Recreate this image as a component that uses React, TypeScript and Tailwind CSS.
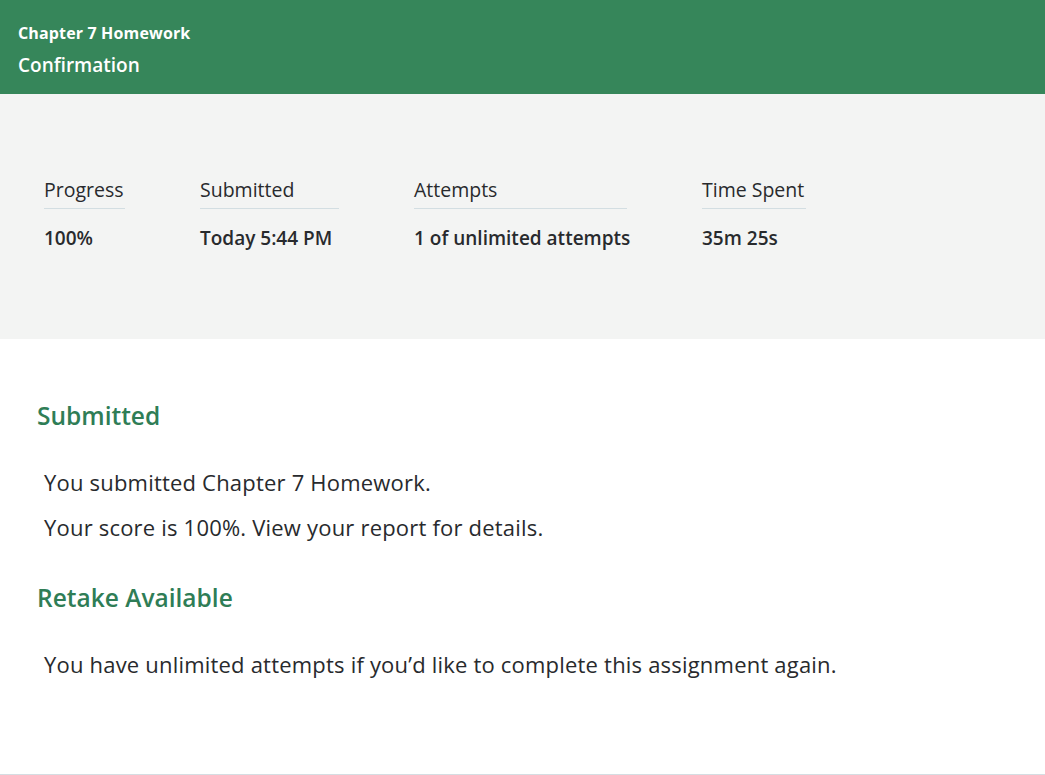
import React from "react";

const stats = [
	{ label: "Progress", value: "100%", width: "w-[81px]" },
	{ label: "Submitted", value: "Today 5:44 PM", width: "w-[139px]" },
	{ label: "Attempts", value: "1 of unlimited attempts", width: "w-[213px]" },
	{ label: "Time Spent", value: "35m 25s", width: "w-[104px]" },
];

export default function App() {
	return (
		<div
			className="w-[1045px] h-[775px] bg-white text-[#282a2d] border-b border-[#d5dde2]"
			style={{ fontFamily: "'Open Sans', Lato, sans-serif" }}
		>
			<header className="h-[94px] bg-[#36865a] text-white px-[18px] pt-[22px]">
				<div className="text-[16px] font-bold leading-[22px] tracking-[0.15px]">Chapter 7 Homework</div>
				<h1 className="text-[19px] font-semibold leading-[22px] mt-[10px]">Confirmation</h1>
			</header>

			<section className="h-[245px] bg-[#f3f4f3] px-[44px] pt-[84px]">
				<dl className="flex gap-[75px]">
					{stats.map((s) => (
						<div key={s.label} className={`flex flex-col ${s.width}`}>
							<dt className="text-[19.5px] leading-[24px] pb-[6px] border-b border-[#d3dee2] whitespace-nowrap">
								{s.label}
							</dt>
							<dd className="text-[19px] font-semibold leading-[24px] mt-[17px] whitespace-nowrap">
								{s.value}
							</dd>
						</div>
					))}
				</dl>
			</section>

			<main className="px-[37px] pt-[62px]">
				<h2 className="text-[24.5px] font-semibold text-[#2f7d56] leading-[30px]">Submitted</h2>
				<div className="pl-[7px] mt-[38px] text-[22px] tracking-[0.2px] leading-[26px] flex flex-col gap-[19px]">
					<p>You submitted Chapter 7 Homework.</p>
					<p>Your score is 100%. View your report for details.</p>
				</div>
				<h2 className="text-[24.5px] font-semibold text-[#2f7d56] leading-[30px] mt-[43px]">
					Retake Available
				</h2>
				<p className="pl-[7px] mt-[38px] text-[22px] tracking-[0.2px] leading-[26px]">
					You have unlimited attempts if you’d like to complete this assignment again.
				</p>
			</main>
		</div>
	);
}
